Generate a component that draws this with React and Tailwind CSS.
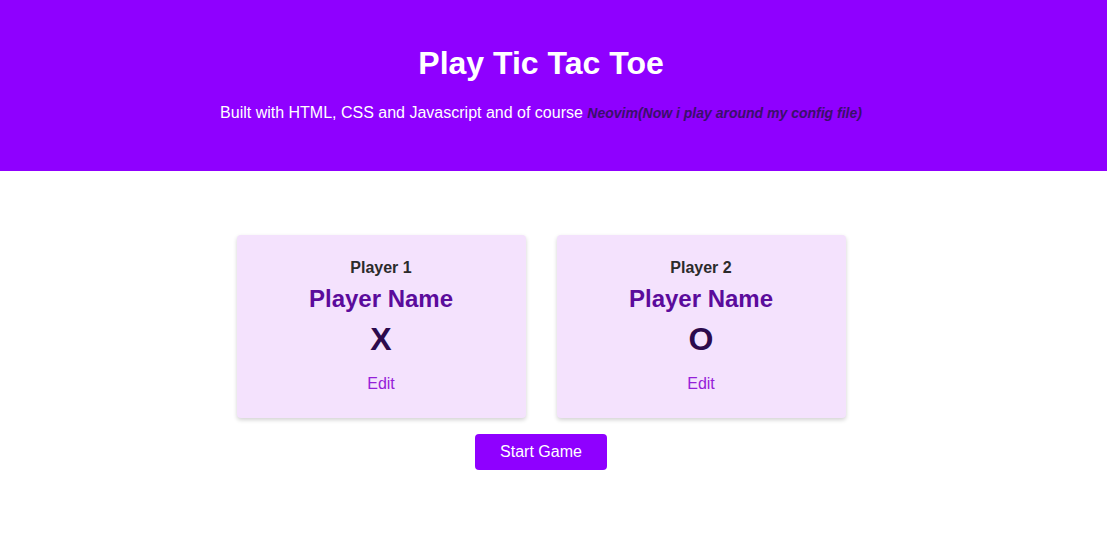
export default function App() {
  const font = { fontFamily: '"Liberation Sans", Arial, sans-serif' };
  const Card = ({ label, symbol }) => (
    <div className="w-[289px] h-[183px] bg-[#f4e2fd] rounded-[4px] shadow-[0_2px_4px_rgba(0,0,0,0.18)] flex flex-col items-center pt-[23px]">
      <div className="text-[16px] leading-[20px] font-bold text-[#2b2b2b]">{label}</div>
      <div className="mt-[7px] text-[24px] leading-[28px] font-bold text-[#5b0b9c]">Player Name</div>
      <div className="mt-[6px] text-[32px] leading-[40px] font-bold text-[#2c0a4d]">{symbol}</div>
      <div className="mt-[15px] text-[16px] leading-[20px] text-[#9420d8]">Edit</div>
    </div>
  );
  return (
    <div className="w-[1107px] h-[559px] bg-white overflow-hidden" style={font}>
      <header className="h-[171px] bg-[#8f00ff]">
        <div className="w-[1082px] flex flex-col items-center pt-[43px]">
          <h1 className="text-[32px] leading-[40px] font-bold text-white">Play Tic Tac Toe</h1>
          <p className="mt-[20px] text-[16px] leading-[20px] text-white">
            Built with HTML, CSS and Javascript and of course{" "}
            <em className="font-bold text-[14px] text-[#3a0f6a]">Neovim(Now i play around my config file)</em>
          </p>
        </div>
      </header>
      <main className="w-[1082px] flex flex-col items-center pt-[64px]">
        <div className="flex gap-[31px]">
          <Card label="Player 1" symbol="X" />
          <Card label="Player 2" symbol="O" />
        </div>
        <button className="mt-[16px] w-[132px] h-[36px] bg-[#8f00ff] rounded-[4px] text-white text-[16px] leading-[20px]">
          Start Game
        </button>
      </main>
    </div>
  );
}
